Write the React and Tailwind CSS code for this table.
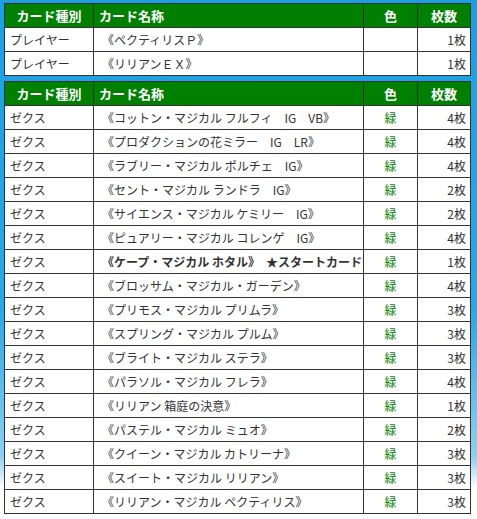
const players = [
  { type: "プレイヤー", name: "《ペクティリスＰ》", color: "", count: "1枚" },
  { type: "プレイヤー", name: "《リリアンＥＸ》", color: "", count: "1枚" },
];

const zex = [
  ["《コットン・マジカル フルフィ　IG　VB》", "4枚"],
  ["《プロダクションの花ミラー　IG　LR》", "4枚"],
  ["《ラブリー・マジカル ポルチェ　IG》", "4枚"],
  ["《セント・マジカル ランドラ　IG》", "2枚"],
  ["《サイエンス・マジカル ケミリー　IG》", "2枚"],
  ["《ピュアリー・マジカル コレンゲ　IG》", "4枚"],
  ["START", "1枚"],
  ["《ブロッサム・マジカル・ガーデン》", "4枚"],
  ["《プリモス・マジカル プリムラ》", "3枚"],
  ["《スプリング・マジカル プルム》", "3枚"],
  ["《ブライト・マジカル ステラ》", "3枚"],
  ["《パラソル・マジカル フレラ》", "4枚"],
  ["《リリアン 箱庭の決意》", "1枚"],
  ["《パステル・マジカル ミュオ》", "2枚"],
  ["《クイーン・マジカル カトリーナ》", "3枚"],
  ["《スイート・マジカル リリアン》", "3枚"],
  ["《リリアン・マジカル ペクティリス》", "3枚"],
];

const cell = "border border-[#333] h-[24px] py-0 leading-none";

const Header = () => (
  <tr className="bg-[#008000] text-white font-bold text-[13px]">
    <th className={`${cell} w-[89px] text-center`}>カード種別</th>
    <th className={`${cell} text-left pl-[5px]`}>カード名称</th>
    <th className={`${cell} w-[54px] text-center`}>色</th>
    <th className={`${cell} w-[53px] text-center`}>枚数</th>
  </tr>
);

const Row = ({ type, name, color, count }) => (
  <tr className="bg-white text-[#333] text-[12px]">
    <td className={`${cell} pl-[5px]`}>{type}</td>
    <td className={`${cell} pl-[8px]`}>
      {name === "START" ? (
        <span className="font-bold">
          《ケープ・マジカル ホタル》　★スタートカード
        </span>
      ) : (
        name
      )}
    </td>
    <td className={`${cell} text-center text-[#008000]`}>{color}</td>
    <td className={`${cell} text-right pr-[4px]`}>{count}</td>
  </tr>
);

export default function App() {
  return (
    <div
      className="w-[477px] h-[519px] overflow-hidden pt-[3px] pl-[4px] bg-[linear-gradient(180deg,#1c9fe2_0%,#2aa8e6_60%,#8fd0f0_88%,#ffffff_94%)]"
      style={{ fontFamily: '"Noto Sans CJK JP", "Noto Sans", sans-serif' }}
    >
      <table className="w-[467px] border-collapse table-fixed">
        <tbody>
          <Header />
          {players.map((p, i) => (
            <Row key={i} {...p} />
          ))}
        </tbody>
      </table>
      <table className="w-[467px] border-collapse table-fixed mt-[5px]">
        <tbody>
          <Header />
          {zex.map(([name, count], i) => (
            <Row key={i} type="ゼクス" name={name} color="緑" count={count} />
          ))}
        </tbody>
      </table>
    </div>
  );
}
